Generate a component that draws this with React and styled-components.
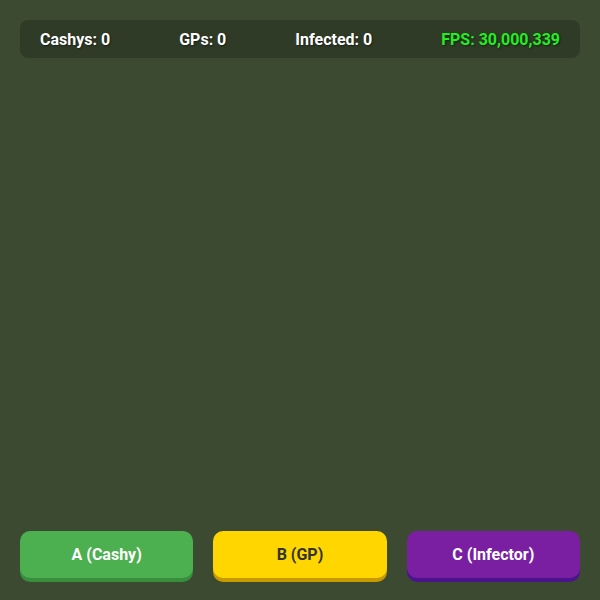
import React from 'react'
import styled, { createGlobalStyle } from 'styled-components'

const GlobalStyle = createGlobalStyle`
  html, body {
    margin: 0;
    padding: 0;
    background: #3b4a31;
    font-family: Roboto, "Liberation Sans", sans-serif;
  }
  * { box-sizing: border-box; }
`

const Screen = styled.div`
  height: 100vh;
  display: flex;
  flex-direction: column;
  justify-content: space-between;
  padding: 20px 20px 22px;
`

const StatsBar = styled.div`
  height: 38px;
  display: flex;
  align-items: center;
  justify-content: space-between;
  padding: 0 20px;
  border-radius: 8px;
  background: rgba(0, 0, 0, 0.2);
`

const Stat = styled.span`
  font-size: 16px;
  font-weight: 700;
  color: ${p => p.$color || '#fff'};
  text-shadow: 1px 1px 2px rgba(0, 0, 0, 0.5);
`

const Controls = styled.div`
  display: grid;
  grid-template-columns: repeat(3, 1fr);
  gap: 20px;
`

const Button = styled.button`
  height: 47px;
  border: none;
  border-radius: 10px;
  font-family: inherit;
  font-size: 16px;
  font-weight: 700;
  cursor: pointer;
  background: ${p => p.$bg};
  color: ${p => p.$fg};
  box-shadow: 0 4px 0 ${p => p.$edge};
`

export default function App() {
  return (
    <>
      <GlobalStyle />
      <Screen>
        <StatsBar>
          <Stat>Cashys: 0</Stat>
          <Stat>GPs: 0</Stat>
          <Stat>Infected: 0</Stat>
          <Stat $color="#22ee22">FPS: 30,000,339</Stat>
        </StatsBar>
        <Controls>
          <Button $bg="#4caf50" $edge="#388e3c" $fg="#fff">A (Cashy)</Button>
          <Button $bg="#ffd600" $edge="#c79a00" $fg="#333">B (GP)</Button>
          <Button $bg="#7b1fa2" $edge="#4a148c" $fg="#fff">C (Infector)</Button>
        </Controls>
      </Screen>
    </>
  )
}
